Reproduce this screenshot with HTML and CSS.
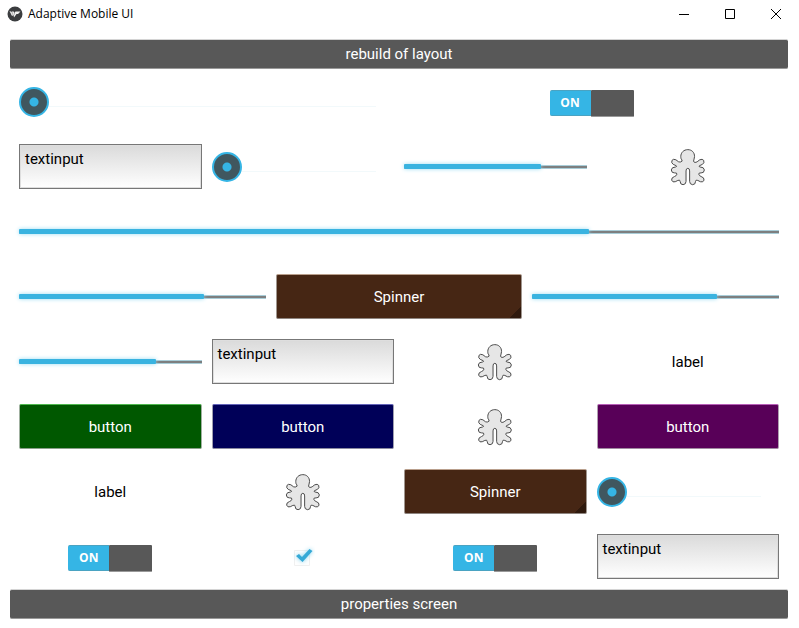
FILE: index.html
```html
<!DOCTYPE html>
<html lang="en">
<head>
<meta charset="utf-8">
<title>Adaptive Mobile UI</title>
<link rel="stylesheet" href="styles.css">
</head>
<body>
<svg class="defs" aria-hidden="true">
  <symbol id="figure" viewBox="30 20 108 116">
    <path d="M83.500 25C96 25 104 34 104 46C104 52 101 56 101 60C102 65 107 65 112 62L120 56Q128 52 132 58Q135 66 128 70L119 74Q116 77 121 78Q133 78 134 87Q133 97 124 96Q116 95 117 100Q118 105 124 107Q134 110 133 118Q130 126 122 123L114 119Q107 116 107 122Q107 132 98 132Q89 131 89 122V90Q89 82 83.500 82Q78 82 78 90V122Q78 131 69 132Q60 132 60 122Q60 116 53 119L45 123Q37 126 34 118Q33 110 43 107Q49 105 50 100Q51 95 43 96Q34 97 33 87Q34 78 46 78Q51 77 48 74L39 70Q32 66 35 58Q39 52 47 56L55 62Q60 65 66 60Q66 56 63 53Q62 50 62 46C62 34 71 25 83.500 25Z" fill="#e6e6e6" stroke="#484848" stroke-width="3"/>
  </symbol>
</svg>
<header class="titlebar">
  <svg class="logo" viewBox="0 0 16 16" aria-hidden="true"><circle cx="8" cy="8" r="7.500" fill="#3b3d3f"/><path d="M2.500 5L5 6L6 5L7.500 7L8.500 5.500L13.500 5.500L11 8L9.500 8L7 11.500L6.500 9L5 10Z" fill="#f2f2f2"/><path d="M5 6L5.500 8.500M7.500 7L7 9" stroke="#777" stroke-width=".6"/></svg>
  <h1>Adaptive Mobile UI</h1>
  <div class="window-actions">
    <button type="button" aria-label="Minimize"><svg viewBox="0 0 12 12"><path d="M1 6.500H11"/></svg></button>
    <button type="button" aria-label="Maximize"><svg viewBox="0 0 12 12"><path d="M1.500 1.500H10.500V10.500H1.500Z"/></svg></button>
    <button type="button" aria-label="Close"><svg viewBox="0 0 12 12"><path d="M1 1L11 11M11 1L1 11"/></svg></button>
  </div>
</header>
<main class="app">
  <button type="button" class="btn bar">rebuild of layout</button>
  <div class="rows">
    <div class="row">
      <input class="slider" type="range" value="0" aria-label="Slider 1">
      <label class="switch"><input type="checkbox" role="switch" checked><span class="on">ON</span><span class="knob"></span></label>
    </div>
    <div class="row">
      <textarea class="text" rows="1" aria-label="Text 1">textinput</textarea>
      <input class="slider" type="range" value="0" aria-label="Slider 2">
      <progress class="progress" max="100" value="75" aria-label="Progress 1"></progress>
      <svg class="figure" role="img" aria-label="Figure"><use href="#figure"/></svg>
    </div>
    <div class="row">
      <progress class="progress" max="100" value="75" aria-label="Progress 2"></progress>
    </div>
    <div class="row">
      <progress class="progress" max="100" value="75" aria-label="Progress 3"></progress>
      <button type="button" class="btn spinner">Spinner</button>
      <progress class="progress" max="100" value="75" aria-label="Progress 4"></progress>
    </div>
    <div class="row">
      <progress class="progress" max="100" value="75" aria-label="Progress 5"></progress>
      <textarea class="text" rows="1" aria-label="Text 2">textinput</textarea>
      <svg class="figure" role="img" aria-label="Figure"><use href="#figure"/></svg>
      <span class="caption">label</span>
    </div>
    <div class="row">
      <button type="button" class="btn green">button</button>
      <button type="button" class="btn navy">button</button>
      <svg class="figure" role="img" aria-label="Figure"><use href="#figure"/></svg>
      <button type="button" class="btn purple">button</button>
    </div>
    <div class="row">
      <span class="caption">label</span>
      <svg class="figure" role="img" aria-label="Figure"><use href="#figure"/></svg>
      <button type="button" class="btn spinner">Spinner</button>
      <input class="slider" type="range" value="0" aria-label="Slider 3">
    </div>
    <div class="row">
      <label class="switch"><input type="checkbox" role="switch" checked><span class="on">ON</span><span class="knob"></span></label>
      <label class="check"><input type="checkbox" checked aria-label="Checkbox"><svg viewBox="0 0 24 24" aria-hidden="true"><path d="M3.500 5.500H18.500V20.500H3.500Z" fill="#fefefe" stroke="#f0f0f0"/><path class="tick" d="M5 11L8 9L11 12L18.500 4L21.500 6L11.500 17Z"/></svg></label>
      <label class="switch"><input type="checkbox" role="switch" checked><span class="on">ON</span><span class="knob"></span></label>
      <textarea class="text" rows="1" aria-label="Text 3">textinput</textarea>
    </div>
  </div>
  <button type="button" class="btn bar">properties screen</button>
</main>
</body>
</html>
```
FILE: styles.css
```css
* { box-sizing: border-box; }

body {
  display: flex;
  flex-direction: column;
  min-height: 100vh;
  margin: 0;
  background: #fff;
  color: #000;
  font: 15px/18px Roboto, sans-serif;
}

button, textarea { font: inherit; }

.defs { position: absolute; width: 0; height: 0; }

.titlebar {
  display: flex;
  align-items: center;
  height: 27px;
  padding-left: 7px;
}

.logo { width: 16px; height: 16px; margin-right: 5px; }

.titlebar h1 {
  margin: 0;
  font: 12px/16px "Open Sans", sans-serif;
}

.window-actions { display: flex; margin-left: auto; }

.window-actions button {
  display: grid;
  place-items: center;
  width: 46px;
  height: 27px;
  padding: 0;
  border: 0;
  background: none;
}

.window-actions svg {
  width: 12px;
  height: 12px;
  fill: none;
  stroke: #000;
}

.app {
  display: flex;
  flex: 1;
  flex-direction: column;
  gap: 10px;
  padding: 12px 11px 9px 10px;
}

.btn {
  padding: 0;
  border: 1px solid;
  border-color: #d4d4d4 #999 #999;
  border-radius: 2px;
  background: #585858;
  color: #fff;
}

.bar { height: 30px; border-left: 0; border-right: 0; }

.rows {
  display: grid;
  flex: 1;
  grid-auto-rows: 1fr;
  gap: 20px;
  padding: 0 9px;
}

.row {
  display: grid;
  grid-auto-columns: minmax(0, 1fr);
  grid-auto-flow: column;
  align-items: center;
  justify-items: center;
  gap: 10px;
}

.row .btn { width: 100%; height: 100%; }

.spinner {
  border-color: #b99f8c #a0968f #8e8580;
  background: linear-gradient(135deg, transparent 50%, #2f190d 50%) right bottom / 11px 11px no-repeat #462614;
}

.green { border-color: #4fb84f #a0b0a0 #8aa08a; background: #005800; }
.navy { border-color: #6464b8 #a0a0b0 #8a8aa0; background: #000058; }
.purple { border-color: #b85fb8 #b0a0b0 #a08aa0; background: #580058; }

.text {
  width: 100%;
  height: 100%;
  padding: 5px;
  border: 1px solid #777;
  box-shadow: inset 0 0 0 1px #dedede;
  background: linear-gradient(#dadada, #fff);
  color: #000;
  resize: none;
  overflow: hidden;
}

.slider {
  appearance: none;
  width: 100%;
  height: 30px;
  margin: 0;
  background: linear-gradient(#f2f9fb, #f2f9fb) 0 19px / calc(100% - 18px) 1px no-repeat;
}

.slider::-webkit-slider-thumb {
  appearance: none;
  width: 30px;
  height: 30px;
  border: 2px solid #35b5e5;
  border-radius: 50%;
  background: radial-gradient(circle, #35b5e5 4px, #40575f 5px);
}

.progress {
  appearance: none;
  width: 100%;
  height: 5px;
  border: 0;
  background: none;
}

.progress::-webkit-progress-bar {
  background: linear-gradient(#a9cdd8 1px, #7d7f80 1px, #7d7f80 3px, #a9cdd8 3px) 0 1px / 100% 4px no-repeat;
}

.progress::-webkit-progress-value {
  border-radius: 1px;
  background: #39b3e0;
  box-shadow: 0 0 4px #9adcf2;
}

.figure { width: 36px; height: 38px; }

.switch {
  position: relative;
  display: flex;
  align-items: flex-start;
  padding-top: 3px;
}

.switch input, .check input {
  position: absolute;
  inset: 0;
  width: 100%;
  height: 100%;
  margin: 0;
  opacity: 0;
}

.on {
  width: 41px;
  border-top: 1px solid #4aa3c2;
  border-bottom: 1px solid #4aa3c2;
  border-radius: 2px 0 0 2px;
  background: #35b5e5;
  color: #fff;
  font: bold 12px/24px "Open Sans", sans-serif;
  text-align: center;
}

.knob {
  width: 43px;
  height: 27px;
  border-bottom: 1px solid #999;
  border-radius: 1px;
  background: #585858;
}

.check { position: relative; display: flex; }
.check svg { width: 24px; height: 24px; }
.tick { fill: #35a9d6; filter: drop-shadow(0 0 2px #7fd0ec); }
```
